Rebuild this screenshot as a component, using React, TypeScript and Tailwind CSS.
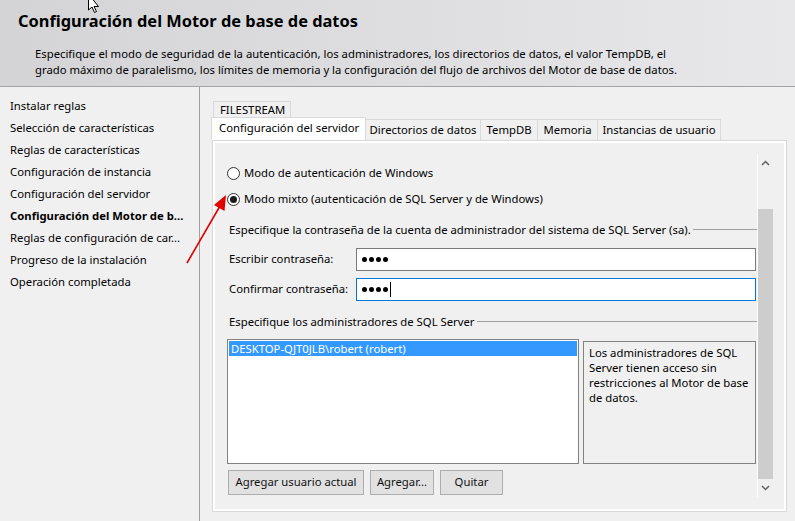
import React from "react";

const navItems = [
  { label: "Instalar reglas" },
  { label: "Selección de características" },
  { label: "Reglas de características" },
  { label: "Configuración de instancia" },
  { label: "Configuración del servidor" },
  { label: "Configuración del Motor de b...", active: true },
  { label: "Reglas de configuración de car..." },
  { label: "Progreso de la instalación" },
  { label: "Operación completada" },
];

const tabs = [
  { label: "Directorios de datos", w: "w-[115px]" },
  { label: "TempDB", w: "w-[57px]" },
  { label: "Memoria", w: "w-[60px]" },
  { label: "Instancias de usuario", w: "w-[123px]" },
];

function Radio({ checked, label }: { checked?: boolean; label: string }) {
  return (
    <div className="flex items-center h-[14px]">
      <span className="w-[13px] h-[13px] rounded-full border border-[#333] bg-white flex items-center justify-center">
        {checked && <span className="w-[7px] h-[7px] rounded-full bg-[#1a1a1a]" />}
      </span>
      <span className="ml-[4px]">{label}</span>
    </div>
  );
}

function GroupLabel({ text }: { text: string }) {
  return (
    <div className="flex items-center h-[14px] pl-[2px]">
      <span className="whitespace-nowrap">{text}</span>
      <span className="flex-1 ml-[2px] h-[2px] border-t border-[#a0a0a0] border-b-white" />
    </div>
  );
}

function Button({ label, w }: { label: string; w: string }) {
  return (
    <button className={`${w} h-[25px] bg-[#e1e1e1] border border-[#adadad] text-[#111]`}>
      {label}
    </button>
  );
}

function Dots({ caret }: { caret?: boolean }) {
  return (
    <div className="flex items-center gap-[2px] pl-[5px]">
      {[0, 1, 2, 3].map((i) => (
        <span key={i} className="w-[5px] h-[5px] rounded-full bg-black" />
      ))}
      {caret && <span className="w-[1px] h-[15px] bg-black" />}
    </div>
  );
}

export default function App() {
  return (
    <div
      className="relative w-[795px] h-[521px] overflow-hidden bg-[#f0f0f0] text-[11.3px] text-black flex flex-col"
      style={{ fontFamily: '"Segoe UI", "Noto Sans", sans-serif' }}
    >
      {/* header */}
      <div className="h-[87px] shrink-0 bg-gradient-to-r from-[#d4d4d7] to-[#e8e8ea] border-b border-[#a3a3a3] pt-[9px]">
        <h1 className="ml-[18px] text-[16.4px] font-bold leading-[24px]">Configuración del Motor de base de datos</h1>
        <p className="ml-[35px] mt-[13px] leading-[16px] w-[720px]">
          Especifique el modo de seguridad de la autenticación, los administradores, los directorios de datos, el valor TempDB, el
          <br />
          grado máximo de paralelismo, los límites de memoria y la configuración del flujo de archivos del Motor de base de datos.
        </p>
      </div>

      <div className="flex flex-1">
        {/* nav */}
        <div className="w-[200px] shrink-0 border-r border-[#a0a0a0] pt-[10px]">
          {navItems.map((n) => (
            <div
              key={n.label}
              className={`h-[22px] leading-[18px] pl-[10px] whitespace-nowrap ${n.active ? "font-bold" : ""}`}
            >
              {n.label}
            </div>
          ))}
        </div>

        {/* content */}
        <div className="flex-1 pt-[14px]">
          <div className="ml-[13px] w-[78px] h-[17px] border border-b-0 border-[#d9d9d9] bg-[#f0f0f0] pl-[6px] leading-[16px]">
            FILESTREAM
          </div>
          <div className="flex ml-[11px] h-[22px] items-end">
            <div className="relative z-10 w-[155px] h-[23px] border border-b-0 border-[#d9d9d9] bg-white pl-[7px] leading-[20px] whitespace-nowrap">
              Configuración del servidor
            </div>
            {tabs.map((t) => (
              <div
                key={t.label}
                className={`${t.w} h-[21px] border border-b-0 border-l-0 border-[#d9d9d9] bg-[#f0f0f0] text-center leading-[19px] whitespace-nowrap`}
              >
                {t.label}
              </div>
            ))}
          </div>

          <div className="ml-[12px] w-[575px] h-[372px] border border-[#d9d9d9] bg-white p-[2px]">
            <div className="h-full bg-[#f0f0f0] flex">
              <div className="flex-1 pl-[12px] pt-[23px] flex flex-col">
                <Radio label="Modo de autenticación de Windows" />
                <div className="mt-[12px]">
                  <Radio checked label="Modo mixto (autenticación de SQL Server y de Windows)" />
                </div>

                <div className="mt-[17px]">
                  <GroupLabel text="Especifique la contraseña de la cuenta de administrador del sistema de SQL Server (sa)." />
                </div>
                <div className="mt-[11px] flex items-center">
                  <span className="w-[129px] pl-[2px]">Escribir contraseña:</span>
                  <div className="w-[400px] h-[23px] bg-white border border-[#7a7a7a] flex items-center">
                    <Dots />
                  </div>
                </div>
                <div className="mt-[7px] flex items-center">
                  <span className="w-[129px] pl-[2px]">Confirmar contraseña:</span>
                  <div className="w-[400px] h-[23px] bg-white border border-[#0078d7] flex items-center">
                    <Dots caret />
                  </div>
                </div>

                <div className="mt-[14px]">
                  <GroupLabel text="Especifique los administradores de SQL Server" />
                </div>

                <div className="mt-[10px] flex items-start">
                  <div className="w-[352px] h-[125px] bg-white border border-[#828282] p-[1px]">
                    <div className="h-[15px] bg-[#3399ff] text-white leading-[15px] pl-[2px]">DESKTOP-QJT0JLB\robert (robert)</div>
                  </div>
                  <div className="ml-[4px] mt-[2px] w-[173px] h-[123px] border border-[#828282] bg-[#f0f0f0] px-[5px] pt-[3px] leading-[15px]">
                    Los administradores de SQL Server tienen acceso sin restricciones al Motor de base de datos.
                  </div>
                </div>

                <div className="mt-[6px] flex gap-[6px] ml-[1px]">
                  <Button label="Agregar usuario actual" w="w-[136px]" />
                  <Button label="Agregar..." w="w-[64px]" />
                  <Button label="Quitar" w="w-[63px]" />
                </div>
              </div>

              {/* scrollbar */}
              <div className="w-[16px] mt-[11px] mb-[12px] mr-[11px] border-l border-white flex flex-col">
                <div className="h-[17px] flex items-center justify-center">
                  <svg width="9" height="6" viewBox="0 0 9 6">
                    <path d="M1 5 L4.5 1.5 L8 5" stroke="#606060" strokeWidth="1.5" fill="none" />
                  </svg>
                </div>
                <div className="h-[38px]" />
                <div className="h-[270px] bg-[#cdcdcd]" />
                <div className="flex-1 flex items-center justify-center">
                  <svg width="9" height="6" viewBox="0 0 9 6">
                    <path d="M1 1 L4.5 4.5 L8 1" stroke="#606060" strokeWidth="1.5" fill="none" />
                  </svg>
                </div>
              </div>
            </div>
          </div>
        </div>
      </div>

      {/* red annotation arrow */}
      <svg className="absolute left-0 top-0 pointer-events-none" width="795" height="521">
        <line x1="187" y1="263" x2="220" y2="206" stroke="#e00000" strokeWidth="1.6" />
        <polygon points="226,195 224.5,211 214,205" fill="#e00000" />
      </svg>

      {/* mouse cursor */}
      <svg className="absolute left-[88px] top-0 pointer-events-none" width="14" height="14" viewBox="0 0 14 14">
        <path d="M0.5 -6 L0.5 10 L4 7 L6.5 12.5 L8.5 11.5 L6 6.5 L10.5 6.5 Z" fill="white" stroke="black" strokeWidth="1" />
      </svg>
    </div>
  );
}
